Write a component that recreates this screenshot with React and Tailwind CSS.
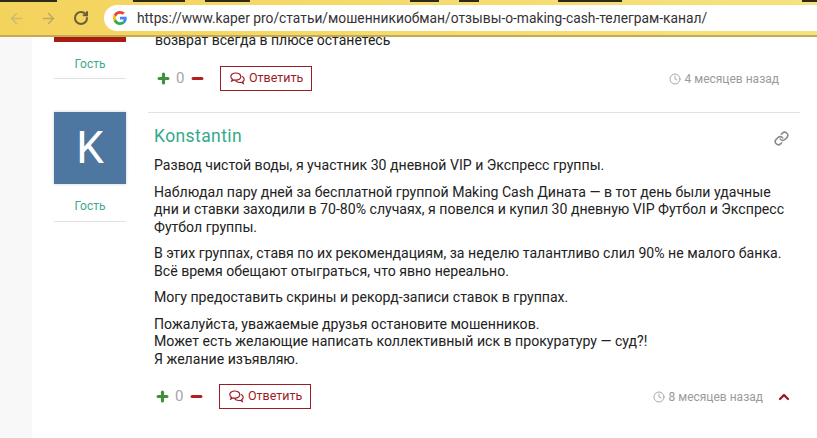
import React from 'react';
import { Clock, Link, ChevronUp, Plus, Minus, ArrowLeft, ArrowRight, RotateCw } from 'lucide-react';

// dark pieces of the cut-off window strip above the browser bar
const topStrip = [
    { gap: 0, w: 57 },
    { gap: 76, w: 52 },
    { gap: 20, w: 45 },
    { gap: 160, w: 29 },
    { gap: 20, w: 20 },
    { gap: 79, w: 64 },
    { gap: 180, w: 15 },
];

const CommentsIcon = () => (
    <svg width="15" height="13" viewBox="0 0 15 13" fill="none" stroke="currentColor" strokeWidth="1.2" className="shrink-0">
        <path d="M5.800 1C3 1 .8 2.600 .8 4.600c0 1.100.6 2 1.600 2.700L1.700 9l2.300-1.100c.6.200 1.200.3 1.800.3 2.800 0 5-1.600 5-3.600S8.600 1 5.800 1z" />
        <path d="M11.900 4.300c1.400.6 2.300 1.700 2.300 2.900 0 1-.6 1.900-1.500 2.500l.6 1.800-2.200-1.200c-.5.100-1 .2-1.500.2-1.700 0-3.200-.7-4-1.800" />
    </svg>
);

const Actions = ({ time, showUp }) => (
    <div className="flex items-center h-[25px]">
        <Plus size={15} strokeWidth={5} className="text-[#3f8f3f] ml-[1px]" />
        <span className="text-[15px] text-[#a5a5a5] ml-[5px] w-[9px]">0</span>
        <Minus size={15} strokeWidth={5} className="text-[#b02020] ml-[5px]" />
        <button className="flex items-center ml-[15px] h-[25px] w-[92px] border border-[#9c1c24] text-[#9c1c24] text-[12.500px] pl-[9px]">
            <CommentsIcon />
            <span className="ml-[4px]">Ответить</span>
        </button>
        <div className={`flex items-center ml-auto text-[12px] text-[#9a9a9a] ${showUp ? '' : 'mr-[21px]'}`}>
            <Clock size={12} strokeWidth={1.7} />
            <span className="ml-[4px]">{time}</span>
        </div>
        {showUp && (
            <div className="w-[37px] flex justify-end pr-[8px]">
                <ChevronUp size={16} strokeWidth={3.500} className="text-[#9c1c24]" />
            </div>
        )}
    </div>
);

const Guest = ({ className }) => (
    <div className={`text-center text-[12px] text-[#3fa98a] border-b border-[#e2e2e2] ${className}`}>Гость</div>
);

const App = () => {
    return (
        <div className="w-[817px] h-[438px] overflow-hidden flex flex-col bg-white font-['Roboto',sans-serif] text-[#222]">
            <div className="h-[37px] shrink-0 flex flex-col bg-gradient-to-r from-[#f4d35c] to-[#f6e27e] border-b-2 border-[#c4aa50]">
                <div className="h-[2px] flex">
                    {topStrip.map((s, i) => (
                        <div key={i} className="bg-[#2e2a18]" style={{ marginLeft: s.gap, width: s.w }} />
                    ))}
                </div>
                <div className="flex items-center flex-1 pb-[1px]">
                    <ArrowLeft size={17} className="ml-[8px] text-[#cdb878]" />
                    <ArrowRight size={17} className="ml-[15px] text-[#bfa85c]" />
                    <RotateCw size={16} strokeWidth={3} className="ml-[16px] text-[#6a5f38]" />
                    <div className="flex items-center ml-[15px] h-[26px] flex-1 bg-white rounded-l-[13px]">
                        <svg width="14" height="14" viewBox="0 0 48 48" className="ml-[9px]">
                            <path fill="#EA4335" d="M24 9.500c3.500 0 6.700 1.200 9.200 3.600l6.900-6.900C35.900 2.400 30.500 0 24 0 14.600 0 6.500 5.400 2.600 13.200l8 6.200C12.500 13.600 17.800 9.500 24 9.500z" />
                            <path fill="#4285F4" d="M47 24.500c0-1.600-.1-3.100-.4-4.500H24v9h12.900c-.6 3-2.200 5.500-4.700 7.200l7.700 6C44.400 37.900 47 31.800 47 24.500z" />
                            <path fill="#FBBC05" d="M10.500 28.600c-.5-1.400-.8-3-.8-4.600s.3-3.200.8-4.600l-8-6.200C.9 16.500 0 20.100 0 24s.9 7.500 2.600 10.800l7.900-6.200z" />
                            <path fill="#34A853" d="M24 48c6.500 0 11.900-2.100 15.900-5.800l-7.700-6c-2.200 1.400-4.900 2.300-8.200 2.300-6.200 0-11.500-4.200-13.400-9.800l-8 6.200C6.500 42.600 14.600 48 24 48z" />
                        </svg>
                        <span className="ml-[10px] text-[13.800px] text-[#333] whitespace-nowrap">https://www.kaper pro/статьи/мошенникиобман/отзывы-о-making-cash-телеграм-канал/</span>
                    </div>
                </div>
            </div>
            <div className="flex flex-1 min-h-0">
                <div className="w-[32px] shrink-0 bg-[#f8f8f8]" />
                <div className="flex-1 pl-[22px] pr-[17px]">
                    <div className="flex h-[75px]">
                        <div className="w-[72px] shrink-0">
                            <div className="h-[5px] bg-[#a81c14]" />
                            <Guest className="mt-[13px] pb-[5px]" />
                        </div>
                        <div className="flex-1 ml-[29px]">
                            <p className="text-[14px] leading-[14px] -mt-[4px]">возврат всегда в плюсе останетесь</p>
                            <div className="mt-[19px]"><Actions time="4 месяцев назад" /></div>
                        </div>
                    </div>
                    <div className="flex">
                        <div className="w-[72px] shrink-0">
                            <div className="h-[72px] bg-[#4d77a0] shadow-[0_0_3px_#ccc] flex items-center justify-center text-white text-[44px]">K</div>
                            <Guest className="mt-[13px] pb-[6px]" />
                        </div>
                        <div className="flex-1 ml-[22px] border-t border-[#e2e2e2] pl-[6px] relative">
                            <h3 className="text-[17.500px] leading-[20px] mt-[13px] text-[#35a98c] tracking-[0.4px]">Konstantin</h3>
                            <Link size={15} strokeWidth={2.500} className="absolute right-[11px] top-[18px] text-[#8a8a8a]" />
                            <div className="text-[14.100px] leading-[17.500px] mt-[11px] space-y-[9px]">
                                <p>Развод чистой воды, я участник 30 дневной VIP и Экспресс группы.</p>
                                <p>Наблюдал пару дней за бесплатной группой Making Cash Дината — в тот день были удачные<br />дни и ставки заходили в 70-80% случаях, я повелся и купил 30 дневную VIP Футбол и Экспресс<br />Футбол группы.</p>
                                <p>В этих группах, ставя по их рекомендациям, за неделю талантливо слил 90% не малого банка.<br />Всё время обещают отыграться, что явно нереально.</p>
                                <p>Могу предоставить скрины и рекорд-записи ставок в группах.</p>
                                <p>Пожалуйста, уважаемые друзья остановите мошенников.<br />Может есть желающие написать коллективный иск в прокуратуру — суд?!<br />Я желание изъявляю.</p>
                            </div>
                            <div className="mt-[16px]"><Actions time="8 месяцев назад" showUp /></div>
                        </div>
                    </div>
                </div>
            </div>
        </div>
    );
};

export default App;
